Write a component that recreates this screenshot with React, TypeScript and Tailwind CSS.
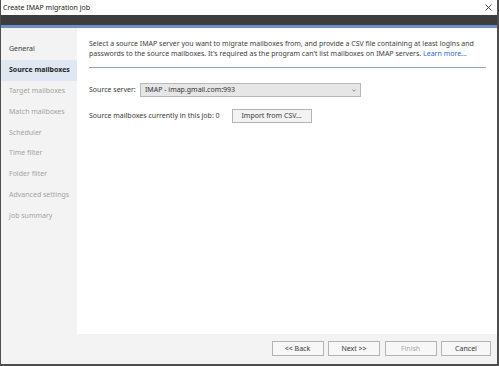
import React from "react";

const items = [
  { label: "General", state: "normal" },
  { label: "Source mailboxes", state: "selected" },
  { label: "Target mailboxes", state: "disabled" },
  { label: "Match mailboxes", state: "disabled" },
  { label: "Scheduler", state: "disabled" },
  { label: "Time filter", state: "disabled" },
  { label: "Folder filter", state: "disabled" },
  { label: "Advanced settings", state: "disabled" },
  { label: "Job summary", state: "disabled" },
];

function FooterButton({ children, disabled }: { children: React.ReactNode; disabled?: boolean }) {
  return (
    <div
      className={
        "w-[52px] h-[15px] flex items-center justify-center border border-[#b3b3b3] bg-[#f7f7f7] " +
        (disabled ? "text-[#a8a8a8]" : "text-[#3a3a3a]")
      }
    >
      {children}
    </div>
  );
}

export default function App() {
  return (
    <div
      className="w-[499px] h-[366px] flex flex-col border-l border-r-2 border-b-2 border-[#4d4d4d] bg-white text-[7px] leading-[10px] text-[#3a3a3a] overflow-hidden"
      style={{ fontFamily: '"Noto Sans", "Open Sans", sans-serif' }}
    >
      <div className="h-[15px] bg-white flex items-center justify-between pl-[2px] pr-[4px]">
        <span className="text-[#222]">Create IMAP migration job</span>
        <svg width="7" height="7" viewBox="0 0 7 7" className="mr-[1px]">
          <path d="M0.5 0.5 L6.5 6.5 M6.5 0.5 L0.5 6.5" stroke="#333" strokeWidth="0.9" />
        </svg>
      </div>
      <div className="h-[10px] bg-[#3d3d3d]" />
      <div className="h-[3px] bg-[#6f8fc2]" />
      <div className="flex-1 flex min-h-0">
        <div className="w-[76px] bg-[#f3f3f3] pt-[11px] flex flex-col">
          {items.map((it) => (
            <div
              key={it.label}
              className={
                "h-[20.8px] flex items-center pl-[8px] " +
                (it.state === "selected"
                  ? "bg-[#dfe7f3] font-bold text-[#1f1f1f]"
                  : it.state === "normal"
                  ? "text-[#3a3a3a]"
                  : "text-[#a3a3a3]")
              }
            >
              {it.label}
            </div>
          ))}
        </div>
        <div className="flex-1 bg-white pl-[12px] pr-[11px] pt-[11px] flex flex-col">
          <div className="text-[#404040]">
            Select a source IMAP server you want to migrate mailboxes from, and provide a CSV file containing at least logins and
            <br />
            passwords to the source mailboxes. It's required as the program can't list mailboxes on IMAP servers.{" "}
            <span className="text-[#2b6cc4]">Learn more...</span>
          </div>
          <div className="h-px bg-[#8ea3c2] mt-[8px]" />
          <div className="flex items-center mt-[15px] h-[14px]">
            <div className="w-[51px]">Source server:</div>
            <div className="w-[221px] h-[14px] border border-[#b8b8b8] bg-[#e6e6e6] flex items-center justify-between pl-[4px] pr-[4px] text-[#333]">
              <span>IMAP - imap.gmail.com:993</span>
              <svg width="4" height="3" viewBox="0 0 4 3">
                <path d="M0.3 0.5 L2 2.3 L3.7 0.5" stroke="#666" strokeWidth="0.7" fill="none" />
              </svg>
            </div>
          </div>
          <div className="flex items-center mt-[12px] h-[14px]">
            <div>Source mailboxes currently in this job: 0</div>
            <div className="ml-[12px] w-[80px] h-[14px] border border-[#b3b3b3] bg-[#f3f3f3] flex items-center justify-center text-[#3a3a3a]">
              Import from CSV...
            </div>
          </div>
        </div>
      </div>
      <div className="h-[30px] bg-[#f3f3f3] flex items-center justify-end gap-[4.5px] pr-[6px] pb-[1px]">
        <FooterButton>&lt;&lt; Back</FooterButton>
        <FooterButton>Next &gt;&gt;</FooterButton>
        <FooterButton disabled>Finish</FooterButton>
        <div className="w-[50px] h-[15px] flex items-center justify-center border border-[#b3b3b3] bg-[#f7f7f7] text-[#3a3a3a]">
          Cancel
        </div>
      </div>
    </div>
  );
}
